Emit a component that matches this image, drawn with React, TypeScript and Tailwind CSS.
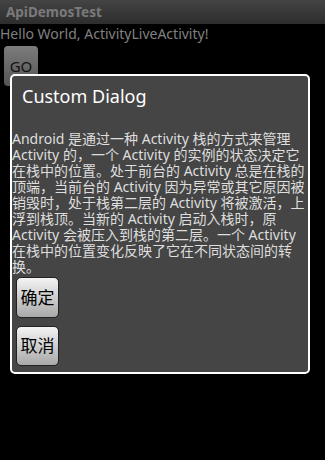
const lines = [
  'Android 是通过一种 Activity 栈的方式来管理',
  'Activity 的，一个 Activity 的实例的状态决定它',
  '在栈中的位置。处于前台的 Activity 总是在栈的',
  '顶端，当前台的 Activity 因为异常或其它原因被',
  '销毁时，处于栈第二层的 Activity 将被激活，上',
  '浮到栈顶。当新的 Activity 启动入栈时，原',
  'Activity 会被压入到栈的第二层。一个 Activity',
  '在栈中的位置变化反映了它在不同状态间的转',
  '换。',
]

function DialogButton({ label, tall }: { label: string; tall?: boolean }) {
  return (
    <button
      className={
        'ml-1 flex w-[43px] items-center justify-center rounded-[5px] border border-[#222] bg-gradient-to-b from-[#f4f4f4] to-[#a9a9a9] text-[17px] text-black ' +
        (tall ? 'h-[41px]' : 'h-[40px]')
      }
    >
      {label}
    </button>
  )
}

export default function App() {
  return (
    <div
      className="relative h-[460px] w-[325px] overflow-hidden bg-black"
      style={{ fontFamily: '"Noto Sans", "Noto Sans CJK SC", sans-serif' }}
    >
      {/* title bar */}
      <div className="h-[24px] bg-gradient-to-b from-[#444] to-[#2d2d2d] px-[6px] text-[13.5px] font-bold leading-[24px] text-[#7a7a7a]">
        ApiDemosTest
      </div>

      <div className="text-[14px] leading-[19px] text-[#808080]">Hello World, ActivityLiveActivity!</div>

      <button className="ml-1 mt-[3px] flex h-[40px] w-[34px] items-start justify-center rounded-[4px] bg-gradient-to-b from-[#7c7c7c] to-[#555] pt-[9px] text-[15px] text-[#111]">
        GO
      </button>

      {/* dialog */}
      <div className="absolute left-[10px] top-[74px] flex h-[300px] w-[300px] flex-col rounded-[5px] border-2 border-white bg-[#454545]">
        <div className="pl-[10px] pt-[8px] text-[18px] leading-[24px] text-white">Custom Dialog</div>

        <div className="mt-[23px] text-[14px] leading-[16px] text-[#dedede]">
          {lines.map((l, i) => (
            <div key={i} className="whitespace-nowrap">
              {l}
            </div>
          ))}
        </div>

        <div className="mt-[2px] flex flex-col gap-[8px]">
          <DialogButton label="确定" tall />
          <DialogButton label="取消" />
        </div>
      </div>
    </div>
  )
}
